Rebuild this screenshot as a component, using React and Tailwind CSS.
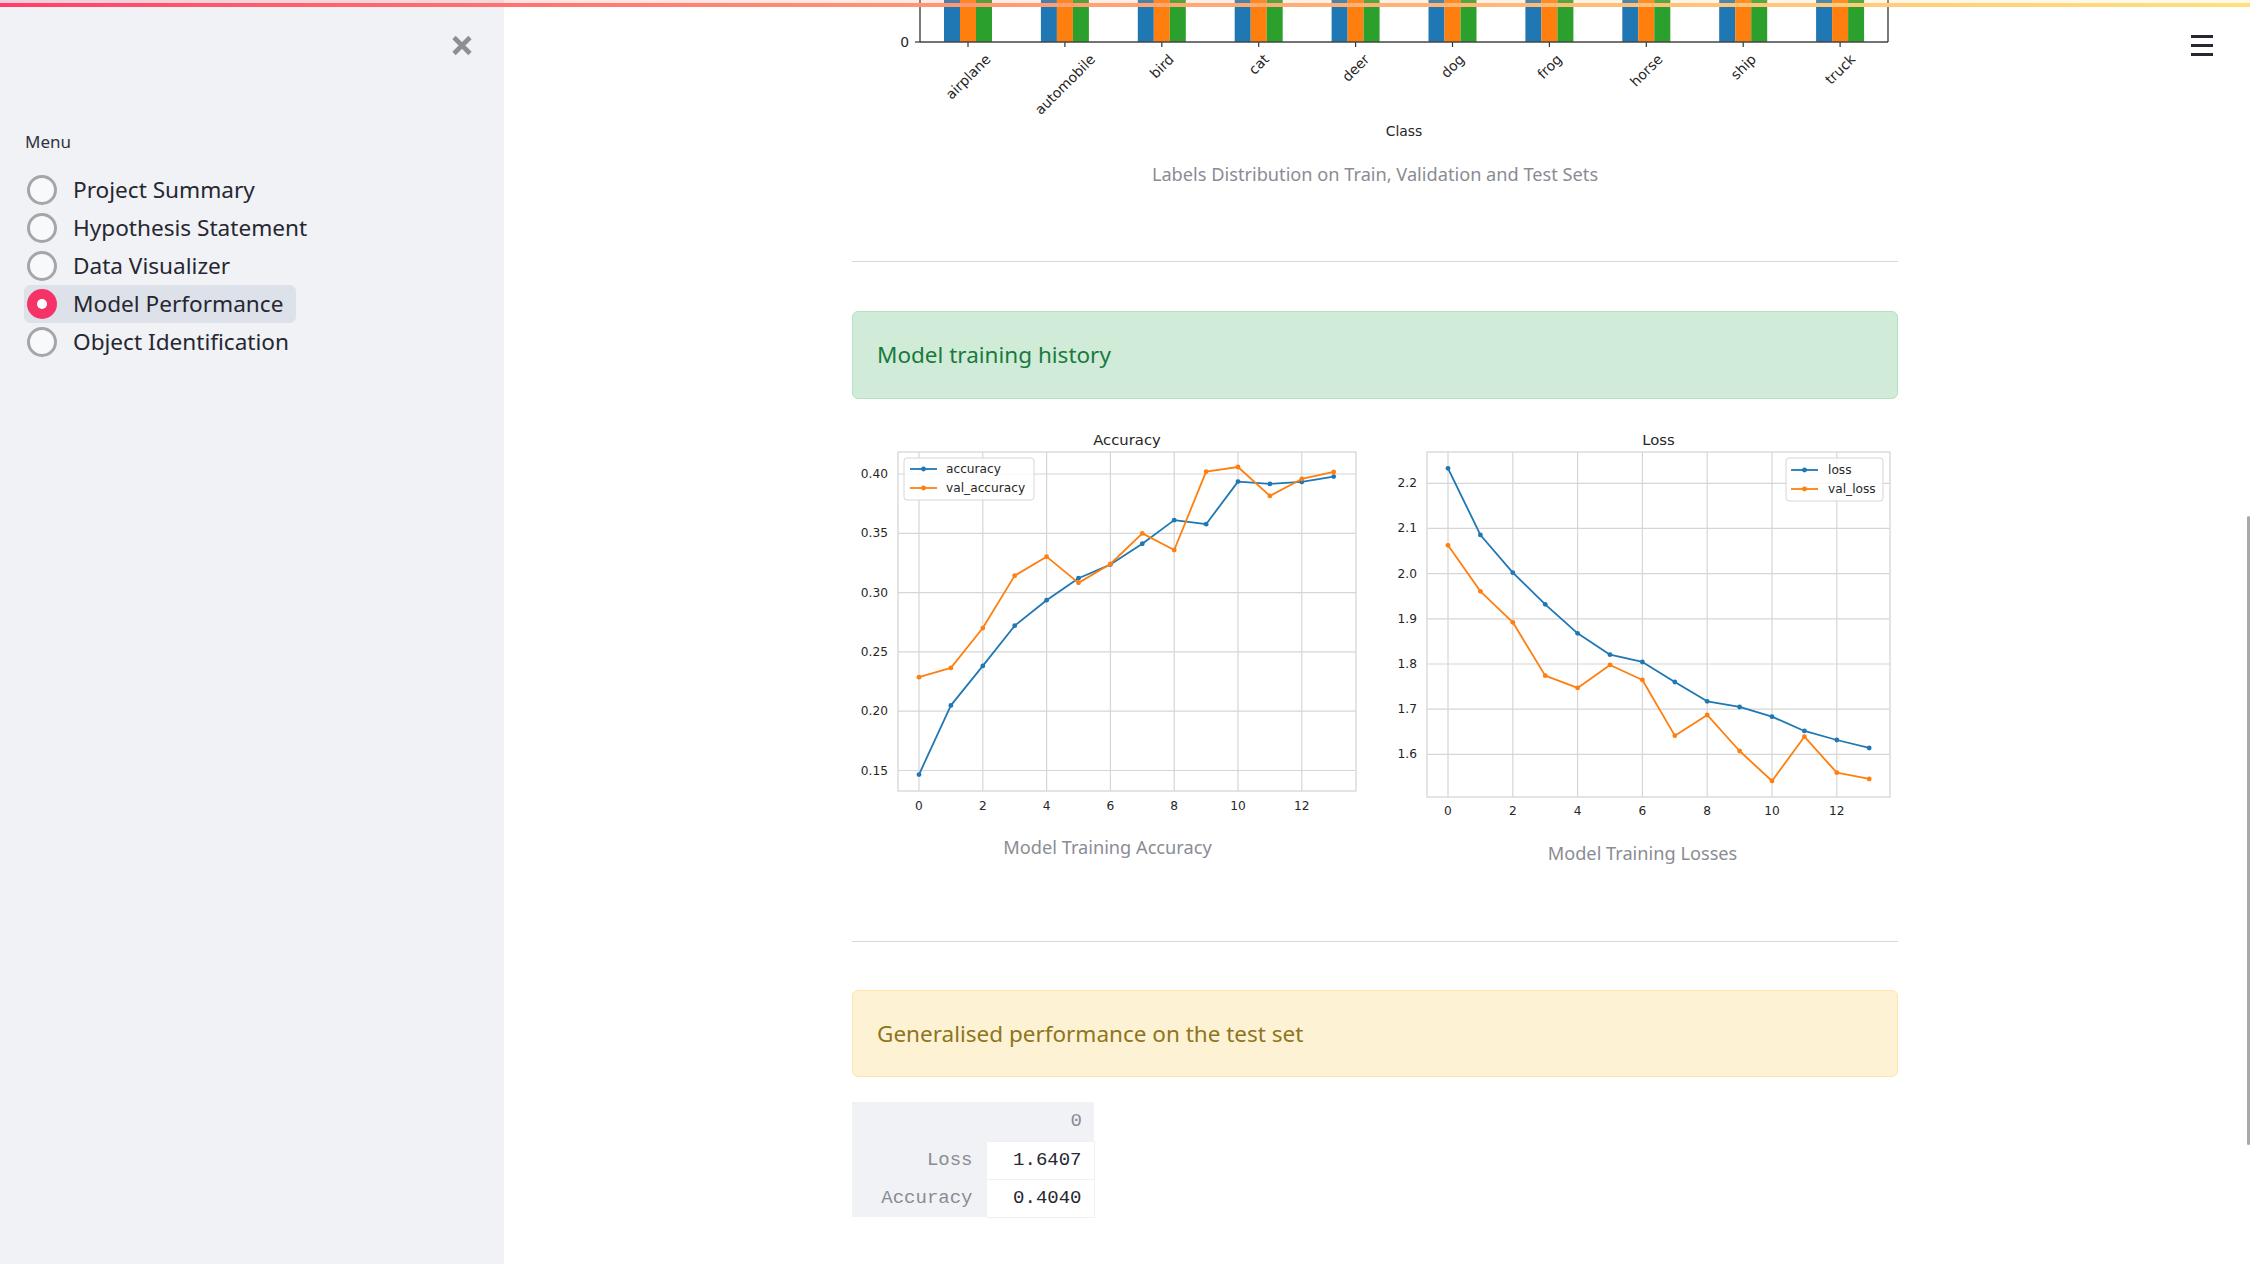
import React from 'react';

const BLUE = '#1f77b4';
const ORANGE = '#ff7f0e';
const GREEN = '#2ca02c';
const GRID = '#d6d6d6';
const INK = '#262626';
const DV = '"DejaVu Sans", "Liberation Sans", sans-serif';

const MENU = ['Project Summary', 'Hypothesis Statement', 'Data Visualizer', 'Model Performance', 'Object Identification'];
const CLASSES = ['airplane', 'automobile', 'bird', 'cat', 'deer', 'dog', 'frog', 'horse', 'ship', 'truck'];

// rough DejaVu Sans advance widths (em), good enough to centre rotated labels
const W = { a: .613, b: .635, c: .55, d: .635, e: .615, f: .352, g: .635, h: .634, i: .278, k: .579, l: .278, m: .974, n: .634, o: .612, p: .635, r: .411, s: .521, t: .392, u: .634 };
const textWidth = (s, fs) => s.split('').reduce((acc, ch) => acc + (W[ch] || .6), 0) * fs;

const accuracy = {
  h: 409, left: 46, right: 504, top: 28, bottom: 367,
  x: i => 67 + 31.9 * i,
  y: v => 50 + ((0.4 - v) / 0.05) * 59.3,
  yTicks: [0.15, 0.2, 0.25, 0.3, 0.35, 0.4].map(v => [v, v.toFixed(2)]),
  yLabelX: 36, xLabelY: 382, titleX: 275, title: 'Accuracy',
  legend: { x: 52, y: 34, w: 130, h: 42, lineX: [58, 85], textX: 94, rows: [45, 64] },
  series: [
    { name: 'accuracy', color: BLUE, data: [0.1466, 0.2049, 0.2382, 0.2721, 0.2936, 0.3121, 0.3236, 0.3412, 0.3611, 0.3577, 0.3936, 0.3916, 0.3933, 0.3978] },
    { name: 'val_accuracy', color: ORANGE, data: [0.2287, 0.2365, 0.2701, 0.3143, 0.3303, 0.3082, 0.3241, 0.3499, 0.3359, 0.402, 0.4059, 0.3815, 0.3958, 0.4017] },
  ],
};

const loss = {
  h: 415, left: 40, right: 503, top: 28, bottom: 373,
  x: i => 61 + 32.4 * i,
  y: v => 59.3 + ((2.2 - v) / 0.1) * 45.17,
  yTicks: [1.6, 1.7, 1.8, 1.9, 2.0, 2.1, 2.2].map(v => [v, v.toFixed(1)]),
  yLabelX: 30, xLabelY: 387, titleX: 271.5, title: 'Loss',
  legend: { x: 399, y: 34, w: 97, h: 43, lineX: [404, 431], textX: 441, rows: [46, 65] },
  series: [
    { name: 'loss', color: BLUE, data: [2.2332, 2.0856, 2.0022, 1.9321, 1.8679, 1.8207, 1.8044, 1.7601, 1.7173, 1.7048, 1.6834, 1.6517, 1.6317, 1.614] },
    { name: 'val_loss', color: ORANGE, data: [2.0627, 1.9609, 1.8923, 1.7742, 1.7469, 1.7978, 1.7646, 1.6413, 1.6871, 1.6074, 1.541, 1.6391, 1.5594, 1.5454] },
  ],
};

function HistoryChart({ cfg }) {
  const { left, right, top, bottom, legend: lg } = cfg;
  const xTicks = [0, 2, 4, 6, 8, 10, 12];
  return (
    <svg width="511" height={cfg.h} style={{ fontFamily: DV }} className="block">
      <text x={cfg.titleX} y="15" fontSize="14.8" fill={INK} textAnchor="middle" dominantBaseline="central">{cfg.title}</text>
      <rect x={left} y={top} width={right - left} height={bottom - top} fill="#fff" stroke={GRID} strokeWidth="1.3" />
      {xTicks.map(t => (
        <g key={'x' + t}>
          <line x1={cfg.x(t)} x2={cfg.x(t)} y1={top} y2={bottom} stroke={GRID} strokeWidth="1.2" />
          <text x={cfg.x(t)} y={cfg.xLabelY} fontSize="12.2" fill={INK} textAnchor="middle" dominantBaseline="central">{t}</text>
        </g>
      ))}
      {cfg.yTicks.map(([v, label]) => (
        <g key={'y' + label}>
          <line x1={left} x2={right} y1={cfg.y(v)} y2={cfg.y(v)} stroke={GRID} strokeWidth="1.2" />
          <text x={cfg.yLabelX} y={cfg.y(v)} fontSize="12.2" fill={INK} textAnchor="end" dominantBaseline="central">{label}</text>
        </g>
      ))}
      {cfg.series.map(s => (
        <g key={s.name}>
          <polyline
            points={s.data.map((v, i) => `${cfg.x(i)},${cfg.y(v)}`).join(' ')}
            fill="none" stroke={s.color} strokeWidth="1.8" strokeLinejoin="round"
          />
          {s.data.map((v, i) => <circle key={i} cx={cfg.x(i)} cy={cfg.y(v)} r="2.4" fill={s.color} />)}
        </g>
      ))}
      {/* legend */}
      <rect x={lg.x} y={lg.y} width={lg.w} height={lg.h} rx="3" fill="#fff" fillOpacity="0.85" stroke={GRID} strokeWidth="1" />
      {cfg.series.map((s, i) => (
        <g key={'lg' + s.name}>
          <line x1={lg.lineX[0]} x2={lg.lineX[1]} y1={lg.rows[i]} y2={lg.rows[i]} stroke={s.color} strokeWidth="1.8" />
          <circle cx={(lg.lineX[0] + lg.lineX[1]) / 2} cy={lg.rows[i]} r="2.4" fill={s.color} />
          <text x={lg.textX} y={lg.rows[i]} fontSize="12.2" fill={INK} dominantBaseline="central">{s.name}</text>
        </g>
      ))}
    </svg>
  );
}

function LabelsChart() {
  const fs = 13.9;
  return (
    <svg width="1046" height="150" style={{ fontFamily: DV }} className="block">
      {CLASSES.map((c, i) => {
        const t = 116 + 96.9 * i;
        const L = textWidth(c, fs);
        const cy = 52 + (L + 13) / (2 * Math.SQRT2);
        return (
          <g key={c}>
            <rect x={t - 24} y="0" width="16" height="42" fill={BLUE} />
            <rect x={t - 8} y="0" width="16" height="42" fill={ORANGE} />
            <rect x={t + 8} y="0" width="16" height="42" fill={GREEN} />
            <line x1={t} x2={t} y1="42" y2="47" stroke="#333" strokeWidth="1.2" />
            <text x={t} y={cy} fontSize={fs} fill={INK} textAnchor="middle" dominantBaseline="central" transform={`rotate(-45 ${t} ${cy})`}>{c}</text>
          </g>
        );
      })}
      <line x1="68" x2="1036" y1="42" y2="42" stroke="#444" strokeWidth="1.3" />
      <line x1="68" x2="68" y1="0" y2="42" stroke="#333" strokeWidth="1.3" />
      <line x1="1036" x2="1036" y1="0" y2="42" stroke="#333" strokeWidth="1.3" />
      <line x1="63" x2="68" y1="42" y2="42" stroke="#333" strokeWidth="1.2" />
      <text x="57" y="42" fontSize={fs} fill={INK} textAnchor="end" dominantBaseline="central">0</text>
      <text x="552" y="131" fontSize={fs} fill={INK} textAnchor="middle" dominantBaseline="central">Class</text>
    </svg>
  );
}

function Caption({ children, className = '' }) {
  return (
    <div className={`h-[28px] leading-[28px] text-center text-[18.2px] text-[#8a8c94] ${className}`}>{children}</div>
  );
}

export default function App() {
  return (
    <div className="relative w-[2250px] h-[1264px] flex overflow-hidden bg-white text-[#262730]" style={{ fontFamily: '"Noto Sans", "Open Sans", sans-serif' }}>
      {/* Sidebar */}
      <aside className="w-[504px] shrink-0 h-full bg-[#f0f2f6] pt-[34px]">
        <div className="flex justify-end pr-[31px] h-[23px]">
          <svg width="22" height="23" viewBox="0 0 22 23">
            <path d="M3 3.5 L19 19.5 M19 3.5 L3 19.5" stroke="#8e8e93" strokeWidth="4.6" />
          </svg>
        </div>
        <div className="mt-[73px] pl-[25px] text-[17px] leading-[24px] text-[#31333f]">Menu</div>
        <div className="mt-[17px] pl-[24px] flex flex-col items-start">
          {MENU.map(item => {
            const on = item === 'Model Performance';
            return (
              <div key={item} className={`inline-flex items-center h-[38px] pl-[3px] pr-[13px] rounded-[6px] ${on ? 'bg-[#dde1e9]' : ''}`}>
                {on ? (
                  <span className="w-[30px] h-[30px] rounded-full bg-[#f63366] flex items-center justify-center">
                    <span className="w-[10px] h-[10px] rounded-full bg-white" />
                  </span>
                ) : (
                  <span className="w-[30px] h-[30px] rounded-full border-[3px] border-[#a5a5aa] bg-[#f8f9fb]" />
                )}
                <span className="ml-[16px] text-[22.6px] leading-[30px] text-[#262730]">{item}</span>
              </div>
            );
          })}
        </div>
      </aside>

      {/* Main */}
      <main className="flex-1 h-full">
        <div className="ml-[348px] w-[1046px]">
          <LabelsChart />
          <Caption className="mt-[10px]">Labels Distribution on Train, Validation and Test Sets</Caption>

          <div className="mt-[73px] h-px bg-[#d8d8db]" />

          <div className="mt-[49px] h-[88px] rounded-[6px] border border-[#b5e0c3] bg-[#d0ecd9] px-[24px] flex items-center text-[22.5px] text-[#1a7a3e]">
            Model training history
          </div>

          <div className="mt-[25px] flex gap-[24px] items-start">
            <div className="w-[511px]">
              <HistoryChart cfg={accuracy} />
              <Caption>Model Training Accuracy</Caption>
            </div>
            <div className="w-[511px]">
              <HistoryChart cfg={loss} />
              <Caption>Model Training Losses</Caption>
            </div>
          </div>

          <div className="mt-[74px] h-px bg-[#d8d8db]" />

          <div className="mt-[48px] h-[87px] rounded-[6px] border border-[#fbe7ab] bg-[#fdf3d4] px-[24px] flex items-center text-[22.5px] text-[#8e7521]">
            Generalised performance on the test set
          </div>

          <table className="mt-[25px] border-collapse text-[19px]" style={{ fontFamily: '"Liberation Mono", "DejaVu Sans Mono", monospace' }}>
            <thead>
              <tr className="h-[39px]">
                <th className="w-[134px] bg-[#f0f2f6]" />
                <th className="w-[108px] bg-[#f0f2f6] text-right pr-[12px] font-normal text-[#8a8c94]">0</th>
              </tr>
            </thead>
            <tbody>
              {[['Loss', '1.6407'], ['Accuracy', '0.4040']].map(([k, v]) => (
                <tr key={k} className="h-[38px]">
                  <th className="bg-[#f0f2f6] text-right pr-[13px] font-normal text-[#8a8c94]">{k}</th>
                  <td className="bg-white text-right pr-[12px] border border-[#eef0f3] text-[#262730]">{v}</td>
                </tr>
              ))}
            </tbody>
          </table>
        </div>
      </main>

      {/* header decoration */}
      <div className="absolute top-0 left-0 w-full">
        <div className="h-[3px] bg-gradient-to-r from-[#ff3d6b] via-[#ffa475] to-[#ffe98a] opacity-20" />
        <div className="h-[4px] bg-gradient-to-r from-[#ff3d6b] via-[#ffa475] to-[#ffe07e]" />
      </div>

      {/* hamburger */}
      <div className="absolute top-[35px] left-[2191px] w-[22px] flex flex-col gap-[6px]">
        <span className="h-[3px] bg-[#262730]" />
        <span className="h-[3px] bg-[#262730]" />
        <span className="h-[3px] bg-[#262730]" />
      </div>

      {/* scrollbar thumb */}
      <div className="absolute right-0 top-[516px] h-[629px] w-[3px] rounded-full bg-[#a9a9ad]" />
    </div>
  );
}
